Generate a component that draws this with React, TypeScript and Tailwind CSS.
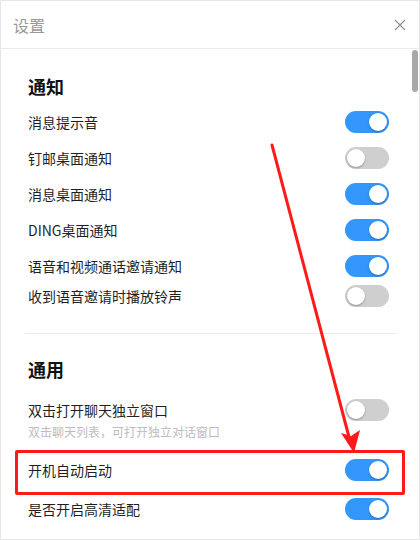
import { FunctionComponent } from "react";

type ToggleProps = { on?: boolean };

const Toggle: FunctionComponent<ToggleProps> = ({ on = false }) => {
  return (
    <div
      className={`relative w-[44px] h-[22px] rounded-full shrink-0 ${on ? "bg-[#3296fa]" : "bg-[#cfcfcf]"}`}
    >
      <div
        className={`absolute top-[2px] w-[18px] h-[18px] rounded-full bg-white shadow-[0_1px_2px_rgba(0,0,0,0.3)] ${on ? "left-[24px]" : "left-[2px]"}`}
      />
    </div>
  );
};

type RowProps = { label: string; on?: boolean; h?: string };

const Row: FunctionComponent<RowProps> = ({ label, on, h = "h-[36px]" }) => {
  return (
    <div className={`flex items-center justify-between ${h}`}>
      <span className="text-[14px] text-[#1f1f1f]">{label}</span>
      <Toggle on={on} />
    </div>
  );
};

const App: FunctionComponent = () => {
  return (
    <div
      className="relative w-[420px] h-[540px] bg-white border border-[#e6e6e6] overflow-hidden"
      style={{ fontFamily: '"Noto Sans CJK SC", "Noto Sans", sans-serif' }}
    >
      {/* Header */}
      <div className="flex items-center justify-between h-[48px] pl-[12px] pr-[13px] border-b border-[#ebebeb]">
        <span className="text-[16px] text-[#999999]">设置</span>
        <svg width="12" height="12" viewBox="0 0 12 12" className="text-[#8c8c8c]">
          <path d="M1 1 L11 11 M11 1 L1 11" stroke="currentColor" strokeWidth="1.1" fill="none" />
        </svg>
      </div>

      {/* Scrollbar */}
      <div className="absolute right-[1px] top-[49px] w-[6px] h-[42px] rounded-[3px] bg-[#a8a8a8]" />

      {/* Content */}
      <div className="pl-[27px] pr-[30px]">
        <div className="pt-[25px] h-[49px] text-[18px] font-bold text-[#111] leading-[24px]">通知</div>
        <div className="mt-[6px] flex flex-col">
          <Row label="消息提示音" on />
          <Row label="钉邮桌面通知" />
          <Row label="消息桌面通知" on />
          <Row label="DING桌面通知" on />
          <Row label="语音和视频通话邀请通知" on />
          <Row label="收到语音邀请时播放铃声" h="h-[24px]" />
        </div>

        <div className="mt-[25px] -ml-[2px] mr-[-8px] h-px bg-[#ebebeb]" />

        <div className="mt-[23px] text-[18px] font-bold text-[#111] leading-[24px]">通用</div>

        <div className="mt-[17px] flex items-center justify-between h-[24px]">
          <span className="text-[14px] text-[#1f1f1f]">双击打开聊天独立窗口</span>
          <Toggle />
        </div>
        <div className="mt-[1px] text-[12px] leading-[18px] text-[#bdbdbd]">双击聊天列表，可打开独立对话窗口</div>

        <div className="mt-[8px] flex flex-col">
          <Row label="开机自动启动" on h="h-[42px]" />
          <Row label="是否开启高清适配" on h="h-[36px]" />
        </div>
      </div>

      {/* Annotation: red box */}
      <div className="absolute left-[14px] top-[449px] w-[390px] h-[45px] border-[3px] border-[#ff1a1a] rounded-[2px]" />

      {/* Annotation: arrow */}
      <svg className="absolute left-0 top-0" width="420" height="540" viewBox="0 0 420 540">
        <path d="M271 144 L348 436" stroke="#ff1a1a" strokeWidth="3" fill="none" strokeLinecap="round" />
        <path d="M340 432 L353 452 L359 429 L350 435 Z" fill="#ff1a1a" />
      </svg>
    </div>
  );
};

export default App;
